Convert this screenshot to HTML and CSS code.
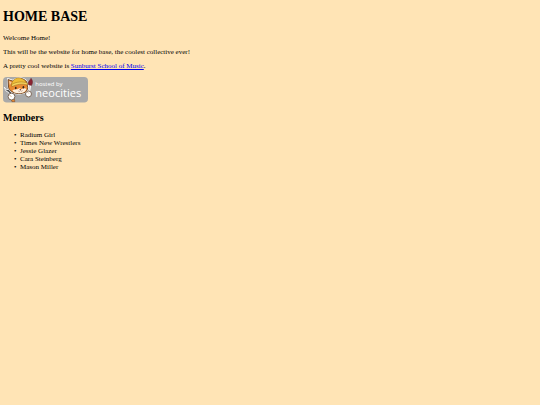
FILE: index.html
```html
<!DOCTYPE html>
<html lang="en">
<head>
    <meta charset="UTF-8">
    <meta name="viewport" content="width=device-width, initial-scale=1.0">
    <title>HOME BASE</title>
    <link rel="stylesheet" href="styles.css">
</head>
<body>
    <h1>HOME BASE</h1>
    <p>Welcome Home!</p>
    <p>This will be the website for home base, the coolest collective ever!</p>
    <p>A pretty cool website is <a href="https://www.sunburstschoolofmusic.com">Sunburst School of Music</a>.</p>

    <a class="badge" href="https://neocities.org" aria-label="hosted by neocities">
        <svg viewBox="0 0 200 60">
            <rect width="200" height="60" rx="9" fill="#a9a9a9"/>
            <!-- wrench -->
            <path d="M3 24l4 9 6 3 9 14 5-3-9-14 1-8-5-5 0 8-5 2z" fill="#555" stroke="#fff" stroke-width="2"/>
            <!-- brush -->
            <path d="M61 15l5 1-5 27-5-1z" fill="#d8d0c8" stroke="#fff" stroke-width="2"/>
            <path d="M60 18c-2-7 3-9 6-15 5 6 4 12 1 17z" fill="#8b2431" stroke="#5c1a24" stroke-width="1"/>
            <!-- cat -->
            <path d="M12 5l12 4C32 0 49 0 56 12l2 13c0 9-8 14-21 14S14 31 13 24z" fill="#e98b32" stroke="#fff" stroke-width="4"/>
            <path d="M12 6l12 4C32 1 49 1 56 12l2 13c0 9-8 14-21 14S14 31 13 24z" fill="#e98b32" stroke="#5f3517" stroke-width="2"/>
            <path d="M14 9l7 4-5 6z" fill="#f8c89a"/>
            <path d="M20 16C24 3 36-1 45 4c7 3 10 8 11 12-8-3-22-2-35 5z" fill="#efbd36" stroke="#8a5a16" stroke-width="1"/>
            <path d="M20 18c11-7 25-8 37-4l1 5c-13-4-26-2-37 4z" fill="#f5d45c" stroke="#8a5a16" stroke-width="1"/>
            <path d="M22 32c4-3 8-3 13-3 3-3 5-3 8 0 5-3 9-3 12-1-2 7-9 10-18 10S24 36 22 32z" fill="#fff0dd"/>
            <ellipse cx="30" cy="26" rx="2" ry="3" fill="#352219"/>
            <ellipse cx="48" cy="24" rx="2" ry="3" fill="#352219"/>
            <path d="M38 28h5l-2 3z" fill="#73352c"/>
            <path d="M36 33q3 2 5-1 2 3 5 0" fill="none" stroke="#73352c" stroke-width="1"/>
            <!-- paws -->
            <path d="M18 49l3 9h7l-2-11z" fill="#e98b32" stroke="#5f3517" stroke-width="1"/>
            <circle cx="20" cy="46" r="8" fill="#fff" stroke="#6b5545" stroke-width="2"/>
            <circle cx="60" cy="40" r="7" fill="#fff" stroke="#6b5545" stroke-width="2"/>
            <path d="M56 34l5 5M15 43l5 3" stroke="#d5a77d" stroke-width="2"/>
            <text class="badge-small" x="76" y="21">hosted by</text>
            <text class="badge-name" x="76" y="47">neocities</text>
        </svg>
    </a>

    <h2>Members</h2>
    <ul>
        <li>Radium Girl</li>
        <li>Times New Wrestlers</li>
        <li>Jessie Glazer</li>
        <li>Cara Steinberg</li>
        <li>Mason Miller</li>
    </ul>
</body>
</html>
```

FILE: styles.css
```css
body {
    margin: 9px 3px;
    background-color: #ffe4b5;
    color: #000;
    font-family: "Liberation Serif", "Times New Roman", serif;
    font-size: 7px;
    line-height: 8px;
}
h1 {
    margin: 0 0 10px;
    font-size: 14px;
    line-height: 15px;
}
p {
    margin: 0 0 6px;
}
a {
    color: #0000ee;
}
.badge {
    display: block;
    width: 85px;
    margin-top: 7px;
}
.badge svg {
    display: block;
    width: 100%;
}
.badge text {
    fill: #fff;
    font-family: "Open Sans", "Noto Sans", sans-serif;
}
.badge-small {
    font-size: 14px;
}
.badge-name {
    font-size: 26px;
}
h2 {
    margin: 9px 0 7px;
    font-size: 10px;
    line-height: 12px;
}
ul {
    margin: 0;
    padding-left: 17px;
    list-style-type: "•\00a0\00a0";
}
```
